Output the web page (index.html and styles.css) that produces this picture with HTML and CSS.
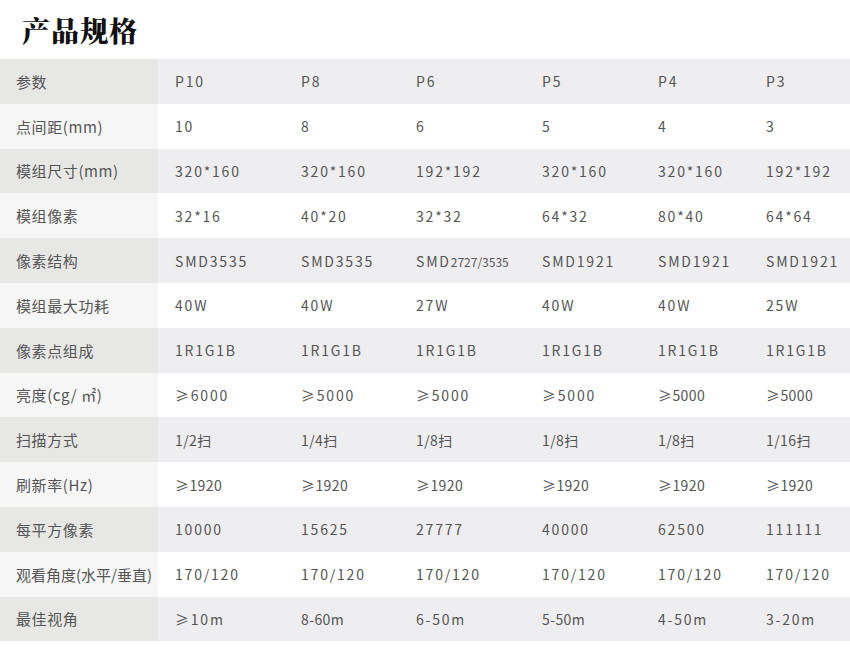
FILE: index.html
```html
<!DOCTYPE html>
<html lang="zh-CN">
<head>
<meta charset="utf-8">
<title>产品规格</title>
<link rel="stylesheet" href="styles.css">
</head>
<body>
<h1 class="title">产品规格</h1>
<table class="spec">
<colgroup>
<col class="c0"><col class="c1"><col class="c2"><col class="c3"><col class="c4"><col class="c5"><col class="c6">
</colgroup>
<tbody>
<tr class="odd"><th>参数</th><td>P10</td><td>P8</td><td>P6</td><td>P5</td><td>P4</td><td>P3</td></tr>
<tr><th>点间距(mm)</th><td>10</td><td>8</td><td>6</td><td>5</td><td>4</td><td>3</td></tr>
<tr class="odd"><th>模组尺寸(mm)</th><td>320*160</td><td>320*160</td><td>192*192</td><td>320*160</td><td>320*160</td><td>192*192</td></tr>
<tr><th>模组像素</th><td>32*16</td><td>40*20</td><td>32*32</td><td>64*32</td><td>80*40</td><td>64*64</td></tr>
<tr class="odd"><th>像素结构</th><td>SMD3535</td><td>SMD3535</td><td>SMD<span class="small">2727/3535</span></td><td>SMD1921</td><td>SMD1921</td><td>SMD1921</td></tr>
<tr><th>模组最大功耗</th><td>40W</td><td>40W</td><td>27W</td><td>40W</td><td>40W</td><td>25W</td></tr>
<tr class="odd"><th>像素点组成</th><td>1R1G1B</td><td>1R1G1B</td><td>1R1G1B</td><td>1R1G1B</td><td>1R1G1B</td><td>1R1G1B</td></tr>
<tr><th>亮度(cg/ ㎡)</th><td>≥6000</td><td>≥5000</td><td>≥5000</td><td>≥5000</td><td class="tight">≥5000</td><td class="tight">≥5000</td></tr>
<tr class="odd"><th>扫描方式</th><td class="tight">1/2扫</td><td class="tight">1/4扫</td><td class="tight">1/8扫</td><td class="tight">1/8扫</td><td class="tight">1/8扫</td><td class="tight">1/16扫</td></tr>
<tr><th>刷新率(Hz)</th><td class="tight">≥1920</td><td class="tight">≥1920</td><td class="tight">≥1920</td><td class="tight">≥1920</td><td class="tight">≥1920</td><td class="tight">≥1920</td></tr>
<tr class="odd"><th>每平方像素</th><td>10000</td><td>15625</td><td>27777</td><td>40000</td><td>62500</td><td>111111</td></tr>
<tr><th class="narrow">观看角度(水平/垂直)</th><td>170/120</td><td>170/120</td><td>170/120</td><td>170/120</td><td>170/120</td><td>170/120</td></tr>
<tr class="odd"><th>最佳视角</th><td>≥10m</td><td class="tight">8-60m</td><td>6-50m</td><td class="tight">5-50m</td><td>4-50m</td><td>3-20m</td></tr>
</tbody>
</table>
</body>
</html>
```

FILE: styles.css
```css
html, body {
  margin: 0;
  padding: 0;
  background: #ffffff;
}

body {
  width: 850px;
  font-family: "Noto Sans CJK SC", "Noto Sans", sans-serif;
  color: #555555;
}

.title {
  margin: 0;
  height: 59px;
  padding-left: 22px;
  box-sizing: border-box;
  display: flex;
  align-items: center;
  font-family: "Noto Serif CJK SC", "AR PL UMing CN", serif;
  font-size: 28px;
  font-weight: 900;
  color: #111111;
  letter-spacing: 1px;
}

.spec {
  width: 850px;
  border-collapse: collapse;
  table-layout: fixed;
}

.c0 { width: 158px; }
.c1 { width: 126px; }
.c2 { width: 115px; }
.c3 { width: 126px; }
.c4 { width: 116px; }
.c5 { width: 108px; }
.c6 { width: 101px; }

.spec tr {
  height: 44.8px;
}

.spec th,
.spec td {
  padding: 0 0 0 17px;
  text-align: left;
  vertical-align: middle;
  font-weight: 400;
  white-space: nowrap;
  overflow: hidden;
}

.spec th {
  padding-left: 16px;
  font-size: 15px;
  letter-spacing: 0.6px;
  color: #555555;
  background: #f6f6f6;
}

.spec th.narrow {
  letter-spacing: 0;
}

.spec td {
  font-size: 14px;
  letter-spacing: 1.8px;
  color: #555555;
  background: #ffffff;
}

.spec td.tight {
  letter-spacing: 0.4px;
}

.spec tr.odd th {
  background: #e7e7e5;
}

.spec tr.odd td {
  background: #eeedef;
}

.small {
  font-size: 12px;
  letter-spacing: 0;
}
```
